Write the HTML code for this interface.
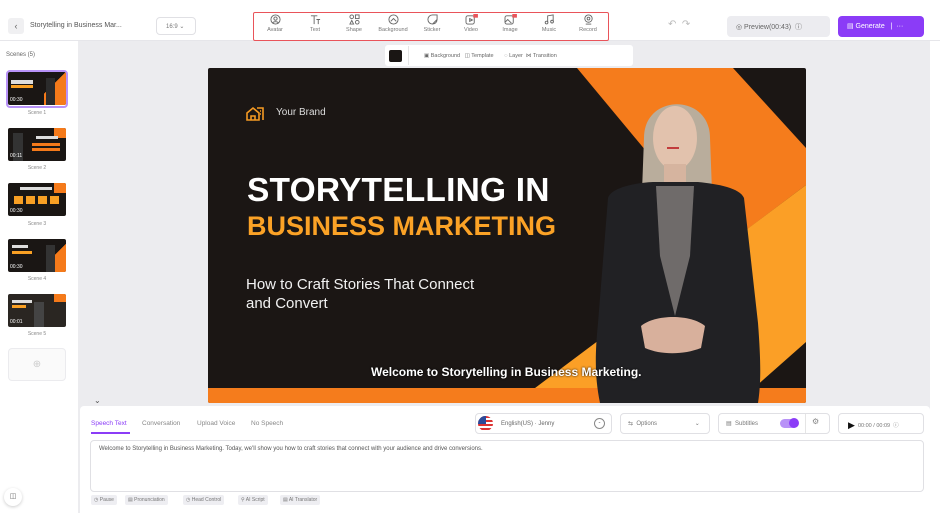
<!DOCTYPE html>
<html><head><meta charset="utf-8"><style>
*{margin:0;padding:0;box-sizing:border-box}
body{width:940px;height:513px;overflow:hidden;background:#fff;font-family:"Liberation Sans",sans-serif;position:relative;color:#555}
.a{position:absolute}
.t{font-size:6px;color:#666;white-space:nowrap}
.tool{position:absolute;top:14px;width:40px;text-align:center}
.tool svg{display:block;margin:0 auto}
.tool span{font-size:5.5px;color:#777;display:block;margin-top:2px}
.thumb{position:absolute;left:8px;width:58px;height:33px;background:#1a1614;overflow:hidden;border-radius:2px}
.lab{position:absolute;left:8px;width:58px;text-align:center;font-size:5px;color:#888}
.box{position:absolute;border:1px solid #e0e0e4;border-radius:4px;background:#fff}
.sb{position:absolute;top:495px;height:10px;background:#eeeef2;border-radius:2px;font-size:5px;color:#777;padding:2px 3px;white-space:nowrap}
</style></head><body>
<div class="a" style="left:0;top:40px;width:940px;height:1px;background:#e6e6ea"></div>
<div class="a" style="left:8px;top:18px;width:16px;height:16px;background:#f0f0f2;border-radius:3px;font-size:9px;text-align:center;line-height:16px;color:#666">&#8249;</div>
<div class="a t" style="left:30px;top:22px;font-size:7px;color:#555">Storytelling in Business Mar...</div>
<div class="box" style="left:156px;top:17px;width:40px;height:18px;font-size:6px;padding:5px 0 0 9px;color:#777">16:9 &#8964;</div>
<div class="a" style="left:253px;top:12px;width:356px;height:29px;border:1.5px solid #e9545a;border-radius:2px"></div>
<div class="tool" style="left:255px"><svg width="11" height="11" viewBox="0 0 12 12" fill="none" stroke="#666" stroke-width="1"><circle cx="6" cy="6" r="5"/><circle cx="6" cy="5" r="1.8"/><path d="M3 9.5c1-1.5 5-1.5 6 0"/></svg><span>Avatar</span></div>
<div class="tool" style="left:295px"><svg width="11" height="11" viewBox="0 0 12 12" fill="none" stroke="#666" stroke-width="1"><path d="M1 2h7M4.5 2v9M7 6h4M9 6v5"/></svg><span>Text</span></div>
<div class="tool" style="left:334px"><svg width="11" height="11" viewBox="0 0 12 12" fill="none" stroke="#666" stroke-width="1"><circle cx="3" cy="3" r="2"/><rect x="7" y="1" width="4" height="4"/><path d="M1 11l2-4 2 4z"/><rect x="7" y="7" width="4" height="4" rx="2"/></svg><span>Shape</span></div>
<div class="tool" style="left:373px"><svg width="11" height="11" viewBox="0 0 12 12" fill="none" stroke="#666" stroke-width="1"><circle cx="6" cy="6" r="5"/><path d="M3 8l3-3 3 3"/></svg><span>Background</span></div>
<div class="tool" style="left:412px"><svg width="11" height="11" viewBox="0 0 12 12" fill="none" stroke="#666" stroke-width="1"><path d="M11 6a5 5 0 1 1-5-5h5v5l-5 5"/></svg><span>Sticker</span></div>
<div class="tool" style="left:451px"><svg width="13" height="11" viewBox="0 0 14 12" fill="none" stroke="#666" stroke-width="1"><rect x="1" y="2" width="9" height="9" rx="2"/><path d="M5 5l3 1.5-3 1.5z"/><rect x="9" y="0" width="5" height="4" fill="#e9545a" stroke="none"/></svg><span>Video</span></div>
<div class="tool" style="left:490px"><svg width="13" height="11" viewBox="0 0 14 12" fill="none" stroke="#666" stroke-width="1"><rect x="1" y="2" width="9" height="9" rx="2"/><path d="M1 9l3-3 4 4"/><rect x="9" y="0" width="5" height="4" fill="#e9545a" stroke="none"/></svg><span>Image</span></div>
<div class="tool" style="left:529px"><svg width="11" height="11" viewBox="0 0 12 12" fill="none" stroke="#666" stroke-width="1"><path d="M4 9V2l6-1v7"/><circle cx="2.8" cy="9.3" r="1.5"/><circle cx="8.8" cy="8.3" r="1.5"/></svg><span>Music</span></div>
<div class="tool" style="left:568px"><svg width="11" height="11" viewBox="0 0 12 12" fill="none" stroke="#666" stroke-width="1"><circle cx="6" cy="5" r="4"/><circle cx="6" cy="5" r="1.5"/><path d="M3 11h6"/></svg><span>Record</span></div>
<div class="a" style="left:668px;top:19px;font-size:10px;color:#bbb">&#8630;&nbsp;&nbsp;&#8631;</div>
<div class="a" style="left:727px;top:16px;width:103px;height:21px;background:#ececf0;border-radius:4px;font-size:7px;color:#666;padding:6px 0 0 9px">&#9678; Preview(00:43) &nbsp;&#9432;</div>
<div class="a" style="left:838px;top:16px;width:86px;height:21px;background:#8b3cf7;border-radius:4px;font-size:7px;color:#fff;padding:6px 0 0 9px">&#9636; Generate &nbsp;&nbsp;| &nbsp;&middot;&middot;&middot;</div>

<div class="a t" style="left:6px;top:52px;font-size:6px">Scenes (5)</div>
<div class="a" style="left:78px;top:41px;width:852px;height:472px;background:#ececef"></div>
<div class="a" style="left:6px;top:70px;width:62px;height:38px;border:2px solid #b892f7;border-radius:4px"></div>
<div class="thumb" style="top:72px"><div class="a" style="right:0;top:0;width:22px;height:33px;background:linear-gradient(135deg,transparent 40%,#f57a1a 40%)"></div><div class="a" style="left:3px;top:8px;width:22px;height:4px;background:#ddd"></div><div class="a" style="left:3px;top:13px;width:22px;height:3px;background:#f9a024"></div><div class="a" style="left:38px;top:6px;width:9px;height:27px;background:#2b2b2b"></div><div class="a" style="left:2px;top:25px;font-size:5px;color:#fff">00:30</div></div>
<div class="lab" style="top:110px">Scene 1</div>
<div class="thumb" style="top:128px"><div class="a" style="right:0;top:0;width:12px;height:10px;background:#f57a1a"></div><div class="a" style="left:5px;top:5px;width:10px;height:28px;background:#333"></div><div class="a" style="left:28px;top:8px;width:22px;height:3px;background:#ddd"></div><div class="a" style="left:24px;top:15px;width:28px;height:3px;background:#f57a1a"></div><div class="a" style="left:24px;top:20px;width:28px;height:3px;background:#f57a1a"></div><div class="a" style="left:2px;top:25px;font-size:5px;color:#fff">00:11</div></div>
<div class="lab" style="top:165px">Scene 2</div>
<div class="thumb" style="top:183px"><div class="a" style="right:0;top:0;width:12px;height:10px;background:#f57a1a"></div><div class="a" style="left:12px;top:4px;width:32px;height:3px;background:#ddd"></div><div class="a" style="left:6px;top:13px;width:46px;height:8px;background:repeating-linear-gradient(90deg,#f9a024 0 9px,transparent 9px 12px)"></div><div class="a" style="left:2px;top:25px;font-size:5px;color:#fff">00:30</div></div>
<div class="lab" style="top:221px">Scene 3</div>
<div class="thumb" style="top:239px"><div class="a" style="right:0;top:0;width:18px;height:33px;background:linear-gradient(135deg,transparent 45%,#f57a1a 45%)"></div><div class="a" style="left:4px;top:6px;width:16px;height:3px;background:#ddd"></div><div class="a" style="left:4px;top:12px;width:20px;height:3px;background:#f9a024"></div><div class="a" style="left:38px;top:6px;width:9px;height:27px;background:#333"></div><div class="a" style="left:2px;top:25px;font-size:5px;color:#fff">00:30</div></div>
<div class="lab" style="top:276px">Scene 4</div>
<div class="thumb" style="top:294px;background:#2a2622"><div class="a" style="right:0;top:0;width:12px;height:8px;background:#f57a1a"></div><div class="a" style="left:4px;top:6px;width:20px;height:3px;background:#ddd"></div><div class="a" style="left:4px;top:11px;width:14px;height:3px;background:#f9a024"></div><div class="a" style="left:26px;top:8px;width:10px;height:25px;background:#444"></div><div class="a" style="left:2px;top:25px;font-size:5px;color:#fff">00:01</div></div>
<div class="lab" style="top:331px">Scene 5</div>
<div class="a" style="left:8px;top:348px;width:58px;height:33px;border:1px solid #ebebee;border-radius:4px;background:#fafafa;text-align:center;font-size:10px;color:#ccc;line-height:31px">&#8853;</div>
<div class="a" style="left:4px;top:488px;width:18px;height:18px;border-radius:50%;background:#fff;box-shadow:0 1px 3px #ccc;font-size:7px;text-align:center;line-height:18px;color:#666">&#9707;</div>

<div class="a" style="left:385px;top:45px;width:248px;height:21px;background:#fff;border-radius:3px"></div>
<div class="a" style="left:389px;top:50px;width:13px;height:12px;background:#1a1614;border-radius:2px"></div>
<div class="a" style="left:408px;top:46px;width:1px;height:19px;background:#e5e5e5"></div>
<div class="a t" style="left:424px;top:53px;font-size:5.5px">&#9635; Background &nbsp;&nbsp;&#9707; Template &nbsp;&nbsp;&nbsp;&nbsp;&nbsp;&nbsp;&#9676; Layer &nbsp;&#8904; Transition</div>

<div class="a" style="left:208px;top:68px;width:598px;height:335px;background:#1b1614;overflow:hidden;border-radius:2px">
<svg class="a" style="left:0;top:0" width="598" height="335">
<polygon points="369,0 525,0 598,80 598,117 517,178" fill="#f57c1c"/>
<polygon points="307,335 598,117 598,274 529,335" fill="#fb9f26"/>
<rect x="0" y="320" width="598" height="15" fill="#f57c1c"/>
<!-- figure -->
<path d="M436 70c0-45 66-45 66 0l3 80h-72z" fill="#b9ad9c"/>
<ellipse cx="467" cy="70" rx="22" ry="32" fill="#e2c2ad"/>
<rect x="456" y="96" width="22" height="22" fill="#d6b49f"/>
<path d="M400 130c3-10 25-15 45-16h45c20 2 42 6 46 16l14 125c3 40 3 60 0 80H392c-4-20-6-40-2-80z" fill="#212124"/>
<path d="M448 118h38l-4 70-15 60-15-60z" fill="#6f6b6a"/>
<path d="M433 258c14-12 50-12 64 0l-4 22c-18 7-40 7-56 0z" fill="#d8b09c"/>
<path d="M459 80h12" stroke="#c23c3c" stroke-width="2"/>
</svg>
<svg class="a" style="left:38px;top:37px" width="18" height="16" viewBox="0 0 18 16" fill="none" stroke="#f59a23" stroke-width="1.6"><path d="M1 8l6-5 6 5v7H1z"/><path d="M5 15v-4h4v4"/><path d="M11 3h6v12"/><path d="M14 6h1M14 9h1"/></svg>
<div class="a" style="left:68px;top:39px;font-size:10px;color:#ddd">Your Brand</div>
<div class="a" style="left:39px;top:103px;font-size:33.5px;font-weight:bold;color:#fff;letter-spacing:0.2px;white-space:nowrap;line-height:40px">STORYTELLING IN</div>
<div class="a" style="left:39px;top:141px;font-size:27px;font-weight:bold;color:#fba226;white-space:nowrap;line-height:34px">BUSINESS MARKETING</div>
<div class="a" style="left:38px;top:208px;font-size:15px;color:#f2f2f2;line-height:18.5px">How to Craft Stories That Connect<br>and Convert</div>
<div class="a" style="left:163px;top:297px;font-size:12px;font-weight:bold;color:#fff;white-space:nowrap;text-shadow:0 0 2px #000">Welcome to Storytelling in Business Marketing.</div>
</div>
<div class="a" style="left:94px;top:396px;font-size:8px;color:#555">&#8964;</div>

<div class="a" style="left:80px;top:406px;width:850px;height:107px;background:#fff;border-radius:4px 4px 0 0"></div>
<div class="a t" style="left:91px;top:420px;font-size:6.5px;color:#8b3cf7">Speech Text</div>
<div class="a" style="left:91px;top:432px;width:39px;height:1.5px;background:#8b3cf7"></div>
<div class="a t" style="left:142px;top:420px;font-size:6.5px;color:#888">Conversation</div>
<div class="a t" style="left:197px;top:420px;font-size:6.5px;color:#888">Upload Voice</div>
<div class="a t" style="left:251px;top:420px;font-size:6.5px;color:#888">No Speech</div>
<div class="box" style="left:475px;top:413px;width:137px;height:21px"></div>
<div class="a" style="left:478px;top:416px;width:15px;height:15px;border-radius:50%;background:repeating-linear-gradient(180deg,#d33 0 2px,#fff 2px 4px);overflow:hidden"><div style="width:8px;height:8px;background:#2c4a9a"></div></div>
<div class="a t" style="left:501px;top:421px;font-size:6px">English(US) · Jenny</div>
<div class="a" style="left:594px;top:418px;width:11px;height:11px;border:1px solid #888;border-radius:50%;font-size:6px;text-align:center;line-height:8px">-</div>
<div class="box" style="left:620px;top:413px;width:90px;height:21px;font-size:6px;padding:6px 0 0 7px;color:#777">&#8646; &nbsp;Options <span style="margin-left:36px">&#8964;</span></div>
<div class="box" style="left:718px;top:413px;width:112px;height:21px;font-size:6px;padding:6px 0 0 7px;color:#777">&#9636; &nbsp;Subtitles</div>
<div class="a" style="left:780px;top:419px;width:18px;height:9px;border-radius:5px;background:#b892f7"></div>
<div class="a" style="left:789px;top:418px;width:10px;height:10px;border-radius:50%;background:#8b3cf7"></div>
<div class="a" style="left:805px;top:414px;width:1px;height:19px;background:#e5e5e5"></div>
<div class="a" style="left:812px;top:417px;font-size:8px;color:#888">&#9881;</div>
<div class="box" style="left:838px;top:413px;width:86px;height:21px;font-size:5.5px;padding:6px 0 0 9px;color:#777"><span style="font-size:9px;color:#111;vertical-align:-1px">&#9654;</span> &nbsp;00:00 / 00:09 &nbsp;&#9432;</div>
<div class="box" style="left:90px;top:440px;width:834px;height:52px;font-size:6px;padding:5px 0 0 8px;color:#555">Welcome to Storytelling in Business Marketing. Today, we'll show you how to craft stories that connect with your audience and drive conversions.</div>
<div class="sb" style="left:91px">&#9719; Pause</div>
<div class="sb" style="left:125px">&#9636; Pronunciation</div>
<div class="sb" style="left:183px">&#9719; Head Control</div>
<div class="sb" style="left:238px">&#9906; AI Script</div>
<div class="sb" style="left:280px">&#9636; AI Translator</div>
</body></html>
